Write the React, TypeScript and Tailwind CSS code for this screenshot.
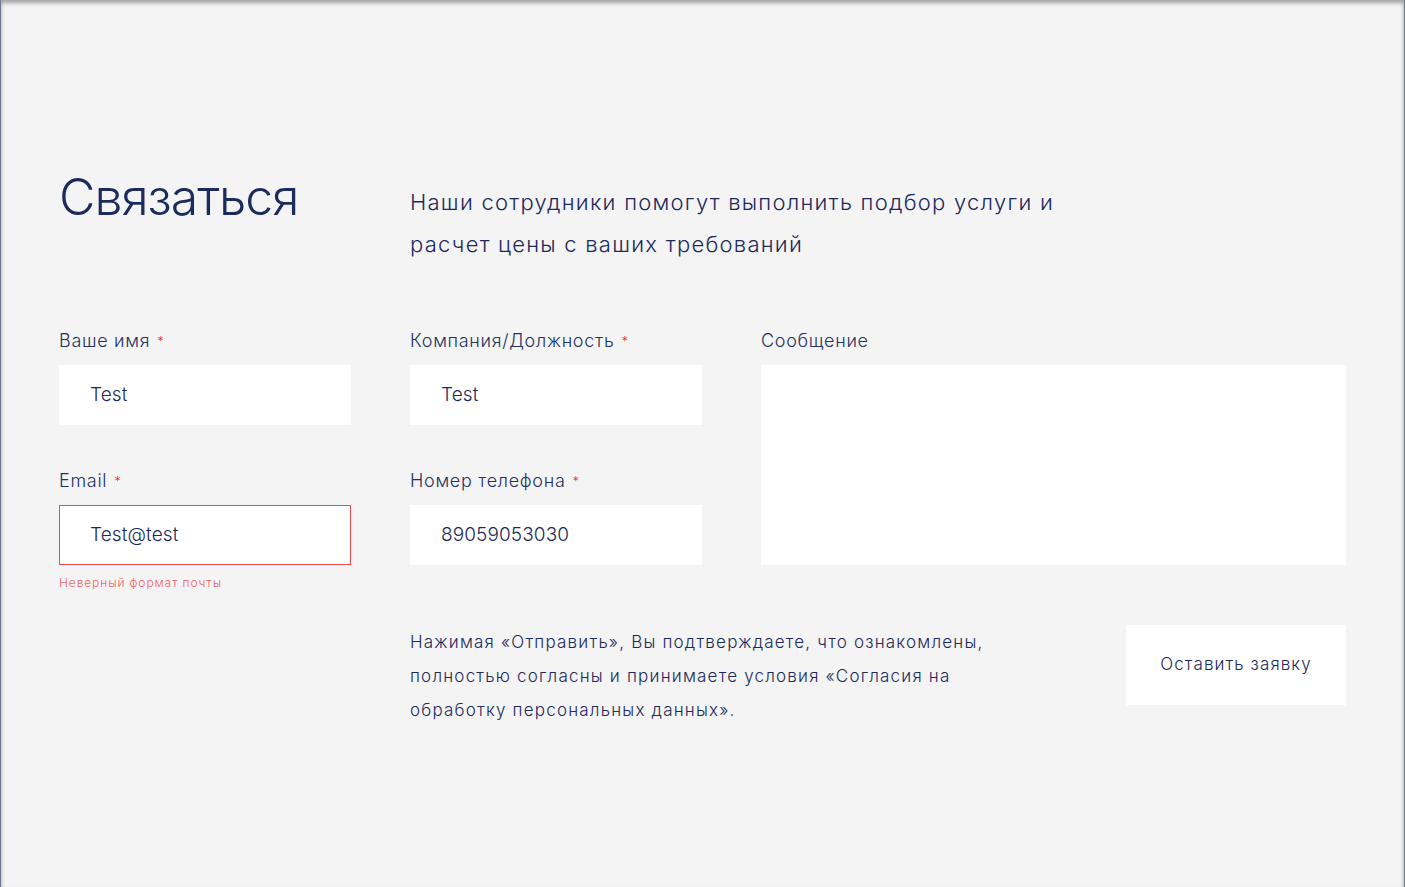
const navy = "text-[#1c2a5c]";

const Label = ({ children, required }: { children: string; required?: boolean }) => (
  <label className="block text-[18px] leading-[24px] font-light tracking-[0.7px] text-[#24335f] mt-[1px] mb-[12px]">
    {children}
    {required && <span className="text-[#e8322f] text-[13px] align-top ml-[7px]">*</span>}
  </label>
);

const Field = ({ value, error }: { value: string; error?: boolean }) => (
  <div
    className={`h-[60px] bg-white flex items-center text-[19px] font-light tracking-[0.1px] ${navy} ${
      error ? "border border-[#ec4c4c] pl-[30px]" : "pl-[31px]"
    }`}
  >
    {value}
  </div>
);

const App = () => {
  return (
    <div
      className="min-h-screen h-[887px] bg-[#f4f4f4] border-l border-r border-[#6f7891] shadow-[inset_0_3px_4px_rgba(0,0,0,0.35)]"
      style={{ fontFamily: "Inter, 'Noto Sans', sans-serif" }}
    >
      <div className="px-[58px] pt-[168px]">
        <div className="grid grid-cols-[292px_292px_1fr] gap-x-[59px]">
          <h2 className={`text-[50px] leading-[58px] font-light tracking-[-1px] ${navy}`}>Связаться</h2>
          <p className={`col-span-2 mt-[13px] text-[22px] leading-[42px] font-light tracking-[1.25px] ${navy}`}>
            Наши сотрудники помогут выполнить подбор услуги и
            <br />
            расчет цены с ваших требований
          </p>
        </div>

        <div className="grid grid-cols-[292px_292px_1fr] gap-x-[59px] mt-[63px]">
          <div>
            <Label required>Ваше имя</Label>
            <Field value="Test" />
            <div className="mt-[44px]">
              <Label required>Email</Label>
              <Field value="Test@test" error />
              <p className="mt-[10px] text-[12px] leading-[16px] font-light tracking-[0.9px] text-[#f06464]">
                Неверный формат почты
              </p>
            </div>
          </div>
          <div>
            <Label required>Компания/Должность</Label>
            <Field value="Test" />
            <div className="mt-[44px]">
              <Label required>Номер телефона</Label>
              <Field value="89059053030" />
            </div>
          </div>
          <div>
            <Label>Сообщение</Label>
            <div className="h-[200px] bg-white" />
          </div>
        </div>

        <div className="grid grid-cols-[292px_292px_1fr] gap-x-[59px] mt-[34px]">
          <div className="col-start-2 col-span-2 flex justify-between items-start">
            <p className={`w-[600px] text-[17px] leading-[34px] font-light tracking-[1.2px] ${navy}`}>
              Нажимая «Отправить», Вы подтверждаете, что ознакомлены, полностью согласны и принимаете условия
              «Согласия на обработку персональных данных».
            </p>
            <button className={`w-[220px] h-[80px] bg-white text-[17px] font-light tracking-[1.1px] ${navy}`}>
              Оставить заявку
            </button>
          </div>
        </div>
      </div>
    </div>
  );
};

export default App;
